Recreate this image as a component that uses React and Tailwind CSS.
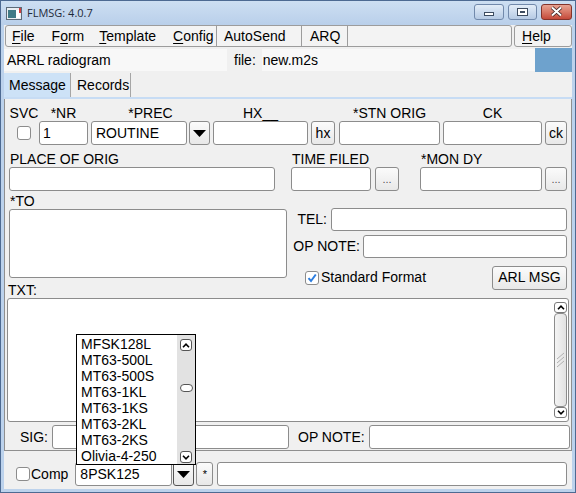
import React from 'react';

const inputCls = 'h-[24px] bg-white border border-[#8c8c8c] rounded-[3px] shrink-0';
const btnCls =
  'h-[24px] shrink-0 border border-[#8c8c8c] rounded-[3px] bg-linear-to-b from-[#fbfbfb] to-[#e8e8e8] flex items-center justify-center';

const DownTri = () => (
  <svg width="13" height="7" viewBox="0 0 13 7">
    <path d="M0 0h13L6.5 7z" fill="#000" />
  </svg>
);

const Chevron = ({ up }) => (
  <svg width="8" height="5" viewBox="0 0 8 5">
    <path d={up ? 'M1 4.2L4 1.2L7 4.2' : 'M1 0.8L4 3.8L7 0.8'} stroke="#000" strokeWidth="1.6" fill="none" />
  </svg>
);

const Checkbox = ({ checked }) => (
  <div className="w-[14px] h-[14px] shrink-0 bg-white border border-[#8c8c8c] rounded-[3px] flex items-center justify-center">
    {checked && (
      <svg width="10" height="10" viewBox="0 0 10 10">
        <path d="M1.5 5.2L4 8L8.8 1.5" stroke="#2b7de0" strokeWidth="2" fill="none" />
      </svg>
    )}
  </div>
);

const Label = ({ children, className = '' }) => (
  <div className={'h-[16px] leading-[16px] whitespace-nowrap ' + className}>{children}</div>
);

const modes = ['MFSK128L', 'MT63-500L', 'MT63-500S', 'MT63-1KL', 'MT63-1KS', 'MT63-2KL', 'MT63-2KS', 'Olivia-4-250'];

export default function App() {
  return (
    <div className="relative w-[576px] h-[493px] bg-[#bcd2ec] border border-[#4d6a92] flex flex-col font-['Liberation_Sans',Arial,sans-serif] text-[14px] text-[#000] overflow-hidden">
      {/* Title bar */}
      <div className="h-[24px] shrink-0 flex items-center bg-linear-to-b from-[#cddff2] to-[#b9cfea]">
        <svg width="16" height="13" viewBox="0 0 16 13" className="ml-[5px]">
          <rect x="0.5" y="0.5" width="15" height="12" fill="#e9eef2" stroke="#5d6b78" />
          <rect x="2" y="3" width="8" height="8" fill="#3f7a86" />
          <rect x="10" y="3" width="4" height="8" fill="#ffffff" />
          <rect x="13" y="1" width="2" height="5" fill="#d04040" />
        </svg>
        <span className="ml-[5px] font-['Open_Sans',sans-serif] text-[11px] text-[#1e2a3a]">FLMSG: 4.0.7</span>
        <div className="flex-1" />
        <div className="flex gap-[4px] mr-[3px] -mt-[3px]">
          <div className="w-[30px] h-[16px] rounded-[3px] border border-[#7189ab] bg-linear-to-b from-[#e3edf8] to-[#b6cae4] flex items-center justify-center">
            <div className="w-[10px] h-[4px] mt-[5px] bg-white border border-[#3d4c60]" />
          </div>
          <div className="w-[29px] h-[16px] rounded-[3px] border border-[#7189ab] bg-linear-to-b from-[#e3edf8] to-[#b6cae4] flex items-center justify-center">
            <div className="w-[11px] h-[8px] border border-[#3d4c60] bg-white flex items-center justify-center">
              <div className="w-[5px] h-[2px] border border-[#3d4c60]" />
            </div>
          </div>
          <div className="w-[31px] h-[16px] rounded-[3px] border border-[#83332a] bg-linear-to-b from-[#e8a392] to-[#c4493a] flex items-center justify-center">
            <svg width="13" height="11" viewBox="0 0 13 11">
              <path d="M2 1.5L11 9.5M11 1.5L2 9.5" stroke="#3a2020" strokeWidth="3.6" />
              <path d="M2 1.5L11 9.5M11 1.5L2 9.5" stroke="#fff" strokeWidth="2" />
            </svg>
          </div>
        </div>
      </div>

      {/* Client */}
      <div className="mx-[3px] h-[464px] bg-[#f0f0f0] flex flex-col">
        {/* Menu bar */}
        <div className="h-[22px] shrink-0 flex">
          <div className="ml-[1px] w-[507px] h-[22px] flex border border-[#9c9c9c] rounded-[3px] bg-[#f3f3f3] leading-[21px]">
            <div className="w-[210px] flex">
              <span className="ml-[6px]"><span className="underline underline-offset-2">F</span>ile</span>
              <span className="ml-[17px]">F<span className="underline underline-offset-2">o</span>rm</span>
              <span className="ml-[15px]"><span className="underline underline-offset-2">T</span>emplate</span>
              <span className="ml-[17px]"><span className="underline underline-offset-2">C</span>onfig</span>
            </div>
            <div className="w-[85px] border-l border-[#9c9c9c] pl-[7px]">AutoSend</div>
            <div className="w-[46px] border-l border-[#9c9c9c] pl-[8px]">ARQ</div>
            <div className="flex-1 border-l border-[#9c9c9c]" />
          </div>
          <div className="ml-[2px] w-[58px] h-[22px] border border-[#9c9c9c] rounded-[3px] bg-[#f3f3f3] leading-[21px] pl-[7px]">
            <span className="underline underline-offset-2">H</span>elp
          </div>
        </div>

        {/* Info row */}
        <div className="h-[26px] shrink-0 flex items-center">
          <div className="w-[223px] h-[22px] bg-[#f8f8f8] leading-[22px] pl-[3px]">ARRL radiogram</div>
          <span className="ml-[7px]">file:</span>
          <div className="ml-[6px] w-[273px] h-[22px] bg-[#f8f8f8] leading-[22px] pl-[1px]">new.m2s</div>
          <div className="w-[37px] h-[24px] bg-[#6ea2cd]" />
        </div>

        {/* Tabs */}
        <div className="h-[26px] shrink-0 flex flex-col">
          <div className="h-[24px] flex">
            <div className="w-[67px] bg-[#cde2f7] leading-[24px] pl-[5px] border-r border-[#a6a6a6]">Message</div>
            <div className="w-[60px] leading-[24px] pl-[6px] border-r border-[#a6a6a6]">Records</div>
          </div>
          <div className="h-[2px] bg-[#c7dcf4]" />
        </div>

        {/* Message panel */}
        <div className="h-[352px] shrink-0 border-l border-r border-b border-[#8f8f8f] flex flex-col">
          {/* Row A */}
          <div className="flex items-end pt-[6px]">
            <div className="ml-[5px] w-[28px] flex flex-col items-center">
              <Label>SVC</Label>
              <div className="h-[24px] flex items-center"><Checkbox /></div>
            </div>
            <div className="ml-[1px] w-[49px] flex flex-col items-center">
              <Label>*NR</Label>
              <div className={inputCls + ' w-[49px] pl-[3px] leading-[22px]'}>1</div>
            </div>
            <div className="ml-[3px] w-[119px] flex flex-col items-center">
              <Label>*PREC</Label>
              <div className="flex">
                <div className={inputCls + ' w-[96px] pl-[4px] leading-[22px]'}>ROUTINE</div>
                <div className={btnCls + ' ml-[2px] w-[21px]'}><DownTri /></div>
              </div>
            </div>
            <div className="ml-[3px] w-[95px] flex flex-col items-center">
              <Label>HX__</Label>
              <div className={inputCls + ' w-[95px]'} />
            </div>
            <div className={btnCls + ' ml-[3px] w-[24px]'}>hx</div>
            <div className="ml-[4px] w-[101px] flex flex-col items-center">
              <Label>*STN ORIG</Label>
              <div className={inputCls + ' w-[101px]'} />
            </div>
            <div className="ml-[3px] w-[99px] flex flex-col items-center">
              <Label>CK</Label>
              <div className={inputCls + ' w-[99px]'} />
            </div>
            <div className={btnCls + ' ml-[3px] w-[22px]'}>ck</div>
          </div>

          {/* Row B */}
          <div className="flex items-end mt-[6px]">
            <div className="ml-[4px] w-[266px] flex flex-col">
              <Label className="pl-[1px]">PLACE OF ORIG</Label>
              <div className={inputCls + ' w-[266px]'} />
            </div>
            <div className="ml-[16px] w-[80px] flex flex-col">
              <Label className="pl-[1px]">TIME FILED</Label>
              <div className={inputCls + ' w-[80px]'} />
            </div>
            <div className={btnCls + ' ml-[4px] w-[24px] text-[11px] text-[#555]'}>...</div>
            <div className="ml-[21px] w-[122px] flex flex-col">
              <Label className="pl-[1px]">*MON DY</Label>
              <div className={inputCls + ' w-[122px]'} />
            </div>
            <div className={btnCls + ' ml-[3px] w-[22px] text-[11px] text-[#555]'}>...</div>
          </div>

          {/* Row C */}
          <div className="flex">
            <div className="ml-[4px] w-[278px] flex flex-col">
              <Label className="mt-[2px] pl-[1px]">*TO</Label>
              <div className="h-[69px] bg-white border border-[#8c8c8c] rounded-[3px]" />
              <Label className="mt-[4px] -ml-[1px]">TXT:</Label>
            </div>
            <div className="w-[280px] flex flex-col">
              <div className="mt-[17px] h-[23px] flex items-center justify-end">
                <span className="mr-[4px]">TEL:</span>
                <div className="w-[236px] h-[23px] bg-white border border-[#8c8c8c] rounded-[3px]" />
              </div>
              <div className="mt-[4px] h-[23px] flex items-center justify-end">
                <span className="mr-[3px]">OP NOTE:</span>
                <div className="w-[204px] h-[23px] bg-white border border-[#8c8c8c] rounded-[3px]" />
              </div>
              <div className="mt-[8px] h-[23px] flex items-center">
                <div className="ml-[18px]"><Checkbox checked /></div>
                <span className="ml-[2px]">Standard Format</span>
                <div className="flex-1" />
                <div className={btnCls + ' w-[75px] h-[23px]'}>ARL MSG</div>
              </div>
            </div>
          </div>

          {/* Row D: TXT */}
          <div className="ml-[2px] w-[562px] h-[124px] bg-white border border-[#8c8c8c] rounded-[3px] flex justify-end">
            <div className="w-[13px] mr-[1px] mt-[3px] mb-[3px] flex flex-col">
              <div className="h-[11px] bg-white border border-[#7a7a7a] rounded-[3px] flex items-center justify-center">
                <Chevron up />
              </div>
              <div className="flex-1 bg-linear-to-r from-[#f4f4f4] to-[#e2e2e2] border border-[#8c8c8c] rounded-[4px] flex items-center justify-center">
                <svg width="9" height="16" viewBox="0 0 9 16">
                  <path d="M1 7L8 1M1 11L8 5M1 15L8 9" stroke="#b0b0b0" strokeWidth="1" />
                </svg>
              </div>
              <div className="h-[11px] bg-white border border-[#7a7a7a] rounded-[3px] flex items-center justify-center">
                <Chevron />
              </div>
            </div>
          </div>

          {/* Row E: SIG */}
          <div className="flex items-center mt-[3px]">
            <div className="w-[43px] text-right">SIG:</div>
            <div className={inputCls + ' ml-[4px] w-[237px]'} />
            <span className="ml-[9px]">OP NOTE:</span>
            <div className={inputCls + ' ml-[4px] w-[201px]'} />
          </div>
        </div>

        {/* Bottom row */}
        <div className="mt-[11px] flex items-center">
          <div className="ml-[12px]"><Checkbox /></div>
          <span className="ml-[1px]">Comp</span>
          <div className={inputCls + ' ml-[7px] w-[97px] pl-[4px] leading-[22px]'}>8PSK125</div>
          <div className={btnCls + ' ml-[1px] w-[21px] border-[#555]'}><DownTri /></div>
          <div className={btnCls + ' ml-[2px] w-[17px] text-[11px]'}>*</div>
          <div className={inputCls + ' ml-[4px] w-[350px]'} />
        </div>
      </div>

      {/* Open mode list */}
      <div className="absolute left-[75px] top-[333px] w-[120px] h-[131px] bg-white border border-[#000] flex overflow-hidden">
        <div className="flex-1 pt-[1px] pl-[4px] leading-[16px]">
          {modes.map((m) => (
            <div key={m} className="h-[16px] whitespace-nowrap">{m}</div>
          ))}
        </div>
        <div className="w-[18px] bg-[#e2e2e2] relative flex flex-col items-center">
          <div className="mt-[4px] w-[12px] h-[12px] bg-white border border-[#555] rounded-[3px] flex items-center justify-center">
            <Chevron up />
          </div>
          <div className="mt-[33px] w-[13px] h-[8px] bg-white border border-[#555] rounded-[4px]" />
          <div className="mt-[59px] w-[12px] h-[12px] bg-white border border-[#555] rounded-[3px] flex items-center justify-center">
            <Chevron />
          </div>
        </div>
      </div>
    </div>
  );
}
